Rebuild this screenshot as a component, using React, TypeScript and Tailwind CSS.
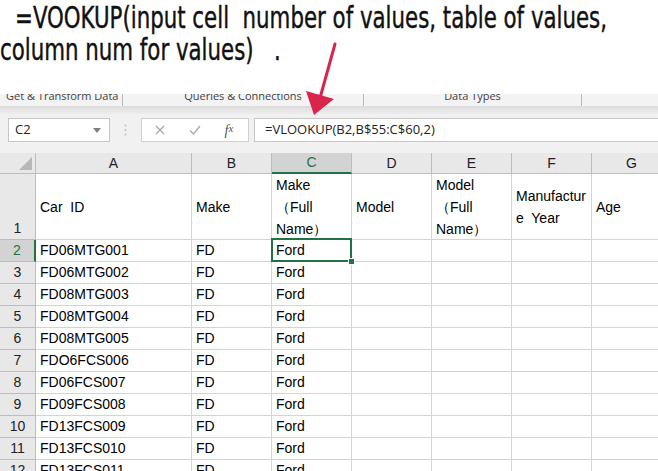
import React from "react";

const colDefs = [
  { k: "A", w: "w-[156px]" },
  { k: "B", w: "w-[80px]" },
  { k: "C", w: "w-[80px]" },
  { k: "D", w: "w-[80px]" },
  { k: "E", w: "w-[80px]" },
  { k: "F", w: "w-[80px]" },
  { k: "G", w: "w-[80px]" },
];

const ids = [
  "FD06MTG001",
  "FD06MTG002",
  "FD08MTG003",
  "FD08MTG004",
  "FD08MTG005",
  "FDO6FCS006",
  "FD06FCS007",
  "FD09FCS008",
  "FD13FCS009",
  "FD13FCS010",
  "FD13FCS011",
];

function Cell({ w, children, sel }: { w: string; children?: React.ReactNode; sel?: boolean }) {
  return (
    <div
      className={`${w} shrink-0 h-full border-r border-b border-[#d4d4d4] pl-[4px] flex items-center whitespace-pre relative ${sel ? "z-10" : ""}`}
    >
      {children}
      {sel && (
        <div className="absolute left-[-1px] top-[-2px] right-[-1px] bottom-[-1px] border-2 border-[#217346]">
          <div className="absolute right-[-5px] bottom-[-5px] w-[7px] h-[7px] bg-[#217346] border border-white" />
        </div>
      )}
    </div>
  );
}

export default function App() {
  return (
    <div className="w-[658px] h-[471px] overflow-hidden bg-white relative font-['Liberation_Sans',Arial,sans-serif] text-black">
      {/* Title */}
      <div className="h-[94px] overflow-hidden">
        <div className="origin-left scale-x-[0.79] font-['Liberation_Sans_Narrow','DejaVu_Sans_Condensed',sans-serif] text-[30px] leading-[32px] text-[#111] whitespace-pre pt-[2px] [-webkit-text-stroke:0.4px_#111]">
          <div className="pl-[19px]">=VOOKUP(input cell  number of values, table of values,</div>
          <div>column num for values)   .</div>
        </div>
      </div>

      {/* Ribbon group labels */}
      <div className="h-[12px] bg-[#f3f3f3] overflow-hidden relative font-['Open_Sans','Noto_Sans',sans-serif] text-[11px] text-[#444] leading-[14px]">
        <div className="flex items-start -mt-[5px] h-[17px]">
          <div className="w-[122px] pl-[6px] shrink-0">Get &amp; Transform Data</div>
          <div className="w-px h-[12px] bg-[#bbb] mt-[5px] shrink-0" />
          <div className="w-[240px] text-center shrink-0">Queries &amp; Connections</div>
          <div className="w-px h-[12px] bg-[#bbb] mt-[5px] shrink-0" />
          <div className="w-[217px] text-center shrink-0">Data Types</div>
          <div className="w-px h-[12px] bg-[#bbb] mt-[5px] shrink-0" />
        </div>
      </div>
      <div className="h-[8px] bg-gradient-to-b from-[#dadada] to-[#eeeeee]" />

      {/* Formula bar */}
      <div className="h-[39px] bg-[#f1f1f1] pt-[4px] flex items-start font-['Open_Sans','Noto_Sans',sans-serif]">
        <div className="ml-[8px] w-[102px] h-[24px] bg-white border border-[#c6c6c6] flex items-center justify-between pl-[6px] pr-[8px] text-[13px] text-[#222]">
          <span>C2</span>
          <svg width="8" height="5" viewBox="0 0 8 5">
            <path d="M0 0 L8 0 L4 5 Z" fill="#808080" />
          </svg>
        </div>
        <div className="w-[31px] h-[24px] flex items-center justify-center">
          <svg width="3" height="12" viewBox="0 0 3 12">
            <circle cx="1.5" cy="1.5" r="1" fill="#c0c0c0" />
            <circle cx="1.5" cy="6" r="1" fill="#c0c0c0" />
            <circle cx="1.5" cy="10.5" r="1" fill="#c0c0c0" />
          </svg>
        </div>
        <div className="w-[108px] h-[24px] bg-white border border-[#d0d0d0] flex items-center">
          <div className="w-[36px] flex justify-center">
            <svg width="10" height="10" viewBox="0 0 10 10">
              <path d="M1 1 L9 9 M9 1 L1 9" stroke="#a6a6a6" strokeWidth="1.2" />
            </svg>
          </div>
          <div className="w-[34px] flex justify-center">
            <svg width="12" height="10" viewBox="0 0 12 10">
              <path d="M1 5.5 L4.5 9 L11 1" stroke="#a6a6a6" strokeWidth="1.2" fill="none" />
            </svg>
          </div>
          <div className="w-[34px] flex justify-center font-['Liberation_Serif',serif] italic text-[14px] text-[#555]">
            f<span className="text-[11px]">x</span>
          </div>
        </div>
        <div className="ml-[5px] flex-1 h-[24px] bg-white border-y border-l border-[#c6c6c6] flex items-center pl-[10px] text-[13px] text-[#222] whitespace-pre">
          =VLOOKUP(B2,B$55:C$60,2)
        </div>
      </div>

      {/* Grid */}
      <div className="text-[14px]">
        {/* Column headers */}
        <div className="flex h-[21px] bg-[#e8e8e8]">
          <div className="w-[36px] shrink-0 h-full border-r border-b border-[#bdbdbd] relative">
            <svg className="absolute right-[3px] bottom-[3px]" width="13" height="13" viewBox="0 0 13 13">
              <path d="M13 0 L13 13 L0 13 Z" fill="#b8b8b8" />
            </svg>
          </div>
          {colDefs.map((c) => (
            <div
              key={c.k}
              className={`${c.w} shrink-0 h-full flex items-center justify-center border-r ${
                c.k === "C"
                  ? "bg-[#d3d3d3] text-[#217346] border-b-2 border-b-[#217346] border-r-[#bdbdbd]"
                  : "text-[#222] border-b border-[#bdbdbd]"
              }`}
            >
              {c.k}
            </div>
          ))}
        </div>

        {/* Row 1 */}
        <div className="flex h-[66px] leading-[22px]">
          <div className="w-[36px] shrink-0 h-full bg-[#e8e8e8] border-r border-b border-[#bdbdbd] flex items-end justify-center text-[#222]">
            1
          </div>
          <Cell w="w-[156px]">Car  ID</Cell>
          <Cell w="w-[80px]">Make</Cell>
          <Cell w="w-[80px]">
            <div>
              Make
              <br />（Full
              <br />Name）
            </div>
          </Cell>
          <Cell w="w-[80px]">Model</Cell>
          <Cell w="w-[80px]">
            <div>
              Model
              <br />（Full
              <br />Name）
            </div>
          </Cell>
          <Cell w="w-[80px]">
            <div>
              Manufactur
              <br />e  Year
            </div>
          </Cell>
          <Cell w="w-[80px]">Age</Cell>
        </div>

        {ids.map((id, i) => {
          const n = i + 2;
          const sel = n === 2;
          return (
            <div key={id} className="flex h-[22px]">
              <div
                className={`w-[36px] shrink-0 h-full border-b border-[#bdbdbd] flex items-center justify-center ${
                  sel
                    ? "bg-[#d3d3d3] text-[#217346] border-r-2 border-r-[#217346]"
                    : "bg-[#e8e8e8] text-[#222] border-r border-r-[#bdbdbd]"
                }`}
              >
                {n}
              </div>
              <Cell w="w-[156px]">{id}</Cell>
              <Cell w="w-[80px]">FD</Cell>
              <Cell w="w-[80px]" sel={sel}>Ford</Cell>
              <Cell w="w-[80px]" />
              <Cell w="w-[80px]" />
              <Cell w="w-[80px]" />
              <Cell w="w-[80px]" />
            </div>
          );
        })}
      </div>

      {/* Red arrow */}
      <svg className="absolute left-0 top-0 pointer-events-none z-20" width="658" height="471" viewBox="0 0 658 471">
        <line x1="335" y1="44" x2="320" y2="98" stroke="#d9254b" strokeWidth="3" strokeLinecap="round" />
        <path d="M306 91 L334 99 L314 115 Z" fill="#d9254b" />
      </svg>
    </div>
  );
}
